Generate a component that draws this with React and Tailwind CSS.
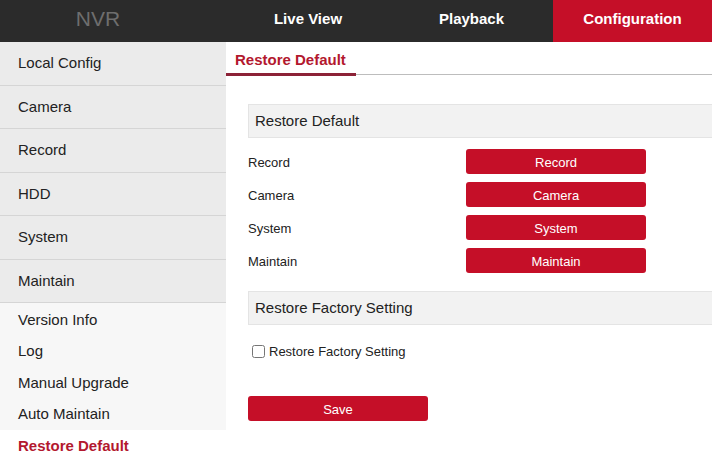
import { useState } from "react";

// Top navigation entries; the last one is the active tab.
const topNav = [
    { label: "Live View", width: "w-[164px]" },
    { label: "Playback", width: "w-[163px]" },
    { label: "Configuration", width: "w-[159px]", active: true },
];

const mainMenu = ["Local Config", "Camera", "Record", "HDD", "System", "Maintain"];
const subMenu = ["Version Info", "Log", "Manual Upgrade", "Auto Maintain"];
const restoreRows = ["Record", "Camera", "System", "Maintain"];

const App = () => {
    const [factory, setFactory] = useState(false);

    return (
        <div className="w-[712px] h-[458px] overflow-hidden bg-white font-['Liberation_Sans',Arial,sans-serif] text-[#222]">
            {/* Header */}
            <div className="flex h-[42px] bg-[#2b2b2b]">
                <div className="w-[196px] flex items-center justify-center pb-[4px] text-[21px] text-[#6e6e6e]">NVR</div>
                <div className="w-[30px]" />
                {topNav.map((item) => (
                    <div
                        key={item.label}
                        className={`${item.width} flex items-center justify-center pb-[4px] text-[15px] font-bold text-white ${item.active ? "bg-[#c50f28]" : ""}`}
                    >
                        {item.label}
                    </div>
                ))}
            </div>

            <div className="flex h-[416px]">
                {/* Sidebar */}
                <div className="w-[226px] shrink-0 flex flex-col">
                    {mainMenu.map((m) => (
                        <div key={m} className="h-[43.5px] shrink-0 flex items-center pl-[18px] text-[15px] bg-[#ebebeb] border-b border-[#d5d5d5]">
                            {m}
                        </div>
                    ))}
                    <div className="bg-[#f7f7f7] pt-[1px]">
                        {subMenu.map((s) => (
                            <div key={s} className="h-[31.5px] flex items-center pl-[18px] text-[15px]">
                                {s}
                            </div>
                        ))}
                    </div>
                    <div className="h-[31px] flex items-center pl-[18px] pt-[4px] text-[15px] font-bold text-[#b3182e] bg-white">
                        Restore Default
                    </div>
                </div>

                {/* Content */}
                <div className="flex-1 min-w-0">
                    <div className="flex border-b border-[#bdbdbd] h-[33px] items-end">
                        <div className="w-[130px] h-full flex items-center pl-[9px] pt-[3px] text-[15px] font-bold text-[#b3182e] border-b-[3px] border-[#8c2237] -mb-[2px]">
                            Restore Default
                        </div>
                    </div>

                    <div className="pl-[22px] pt-[29px]">
                        <div className="h-[34px] flex items-center pl-[6px] text-[15px] bg-[#f2f2f2] border border-[#e4e4e4] border-r-0">
                            Restore Default
                        </div>

                        <div className="flex flex-col gap-[8px] mt-[11px]">
                            {restoreRows.map((r) => (
                                <div key={r} className="flex items-center h-[25px]">
                                    <div className="w-[218px] text-[13px] mt-[2px]">{r}</div>
                                    <button className="w-[180px] h-[25px] rounded-[3px] bg-[#c50f28] text-white text-[13px] pt-[3px]">
                                        {r}
                                    </button>
                                </div>
                            ))}
                        </div>

                        <div className="mt-[18px] h-[34px] flex items-center pl-[6px] text-[15px] bg-[#f2f2f2] border border-[#e4e4e4] border-r-0">
                            Restore Factory Setting
                        </div>

                        <label className="flex items-center gap-[4px] mt-[17px] pl-[4px] text-[13px]">
                            <input
                                type="checkbox"
                                checked={factory}
                                onChange={(e) => setFactory(e.target.checked)}
                                className="w-[13px] h-[13px] m-0"
                            />
                            Restore Factory Setting
                        </label>

                        <button className="mt-[34px] w-[180px] h-[25px] rounded-[3px] bg-[#c50f28] text-white text-[13px] pt-[3px]">
                            Save
                        </button>
                    </div>
                </div>
            </div>
        </div>
    );
};

export default App;
